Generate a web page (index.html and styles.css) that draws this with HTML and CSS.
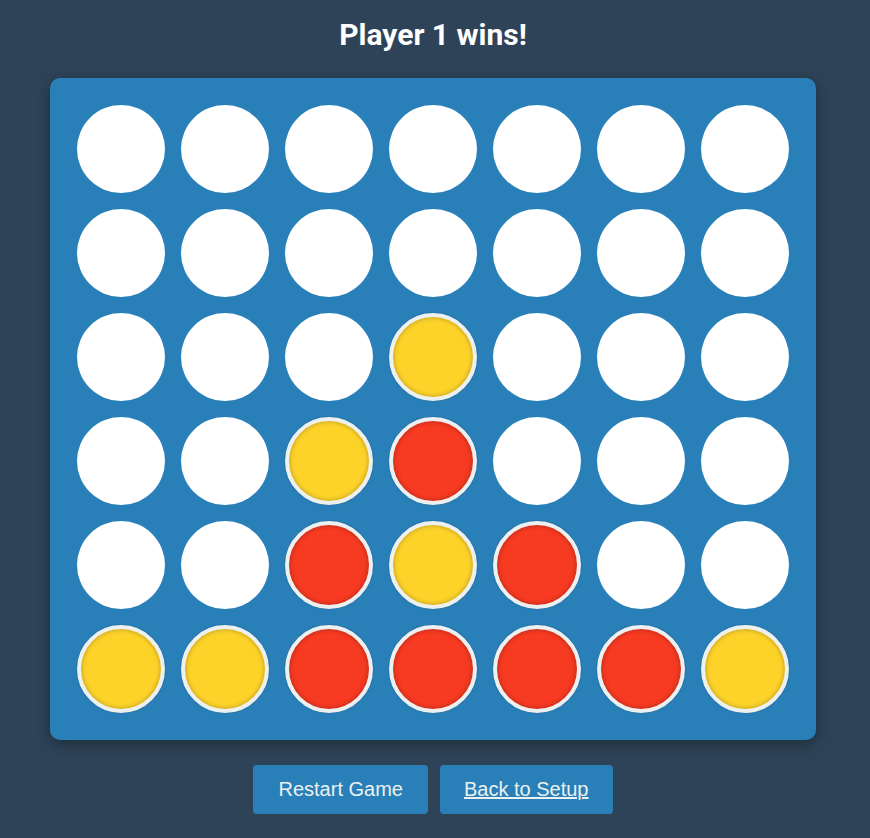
FILE: index.html
```html
<!DOCTYPE html>
<html>
<head>
<meta charset="utf-8">
<link rel="stylesheet" href="styles.css">
</head>
<body>
<div class="page">
  <h1 class="status">Player 1 wins!</h1>
  <div class="board">
    <div class="cell"></div><div class="cell"></div><div class="cell"></div><div class="cell"></div><div class="cell"></div><div class="cell"></div><div class="cell"></div>
    <div class="cell"></div><div class="cell"></div><div class="cell"></div><div class="cell"></div><div class="cell"></div><div class="cell"></div><div class="cell"></div>
    <div class="cell"></div><div class="cell"></div><div class="cell"></div><div class="cell yellow"></div><div class="cell"></div><div class="cell"></div><div class="cell"></div>
    <div class="cell"></div><div class="cell"></div><div class="cell yellow"></div><div class="cell red"></div><div class="cell"></div><div class="cell"></div><div class="cell"></div>
    <div class="cell"></div><div class="cell"></div><div class="cell red"></div><div class="cell yellow"></div><div class="cell red"></div><div class="cell"></div><div class="cell"></div>
    <div class="cell yellow"></div><div class="cell yellow"></div><div class="cell red"></div><div class="cell red"></div><div class="cell red"></div><div class="cell red"></div><div class="cell yellow"></div>
  </div>
  <div class="controls">
    <button class="btn">Restart Game</button>
    <a class="btn link" href="#">Back to Setup</a>
  </div>
</div>
</body>
</html>
```
FILE: styles.css
```css
html, body {
  margin: 0;
  padding: 0;
  background: #2e4358;
  height: 100%;
}
.page {
  width: 866px;
  display: flex;
  flex-direction: column;
  align-items: center;
  padding-top: 19px;
}
.status {
  margin: 0 0 27px;
  font-family: Roboto, "Liberation Sans", sans-serif;
  font-weight: 700;
  font-size: 30px;
  line-height: 32px;
  color: #ffffff;
}
.board {
  display: grid;
  grid-template-columns: repeat(7, 88px);
  grid-auto-rows: 88px;
  gap: 16px;
  padding: 27px;
  background: #2980b9;
  border-radius: 10px;
  box-shadow: 0 4px 14px rgba(0, 0, 0, 0.35);
}
.cell {
  box-sizing: border-box;
  border-radius: 50%;
  background: #ffffff;
}
.cell.red,
.cell.yellow {
  border: 4px solid #ecf0f1;
  box-shadow: inset 0 0 5px rgba(0, 0, 0, 0.3), 0 0 2px rgba(0, 0, 0, 0.25);
}
.cell.red { background: #f73a22; }
.cell.yellow { background: #fdd32a; }
.controls {
  display: flex;
  gap: 12px;
  margin-top: 25px;
}
.btn {
  display: block;
  box-sizing: border-box;
  height: 49px;
  padding: 0 25px;
  border: none;
  border-radius: 4px;
  background: #2980b9;
  color: #ecf0f1;
  font-family: "Liberation Sans", Arial, sans-serif;
  font-size: 20px;
  line-height: 49px;
  cursor: pointer;
}
.btn.link {
  padding: 0 24px;
  text-decoration: underline;
}
```
